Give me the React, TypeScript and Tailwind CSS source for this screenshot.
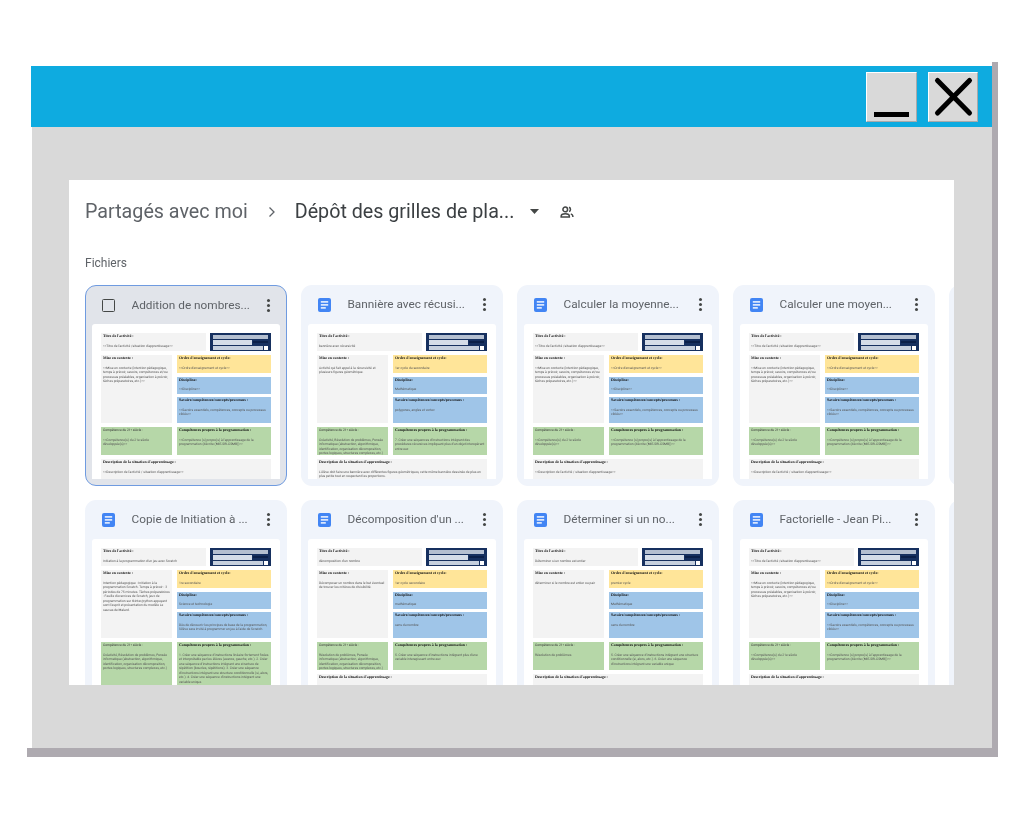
const bodyFont = { fontFamily: '"Roboto", "Liberation Sans", sans-serif' };

interface DocData {
  name: string;
  title: string;
  context: string;
  order: string;
  discipline: string;
  knowledge: string;
  skills21: string;
  prog: string;
  desc: string;
  selected?: boolean;
  tallGreen?: boolean;
}

const T = "<<Titre de l'activité /situation d'apprentissage>>";
const C =
  "<<Mise en contexte (intention pédagogique, temps à prévoir, savoirs, compétences et/ou processus préalables, organisation à prévoir, tâches préparatoires, etc.)>>";
const O = "<<Ordre d'enseignement et cycle>>";
const D = "<<Discipline>>";
const K = "<<Savoirs essentiels, compétences, concepts ou processus ciblés>>";
const S = "<<Compétence(s) du 21e siècle développée(s)>>";
const P =
  "<<Compétence (s) propre(s) à l'apprentissage de la programmation (décrite (MIE-SRI-CSMB))>>";
const E = "<<Description de l'activité / situation d'apprentissage>>";
const CR =
  "Créativité, Résolution de problèmes, Pensée informatique (abstraction, algorithmique, identification, organisation décomposition, portes logiques, structures complexes, etc.)";

const docs: DocData[] = [
  { name: "Addition de nombres...", title: T, context: C, order: O, discipline: D, knowledge: K, skills21: S, prog: P, desc: E, selected: true },
  {
    name: "Bannière avec récusi...",
    title: "bannière avec récursivité",
    context: "Activité qui fait appel à la récursivité et plusieurs figures géométrique.",
    order: "1er cycle du secondaire",
    discipline: "Mathématique",
    knowledge: "polygones, angles et vertex",
    skills21: CR,
    prog: "7. Créer une séquences d'instructions intégrant des procédures récursives impliquant plus d'un objet interopérant entre eux",
    desc: "L'élève doit faire une bannière avec différentes figures géométriques, cette même bannière dessinée de plus en plus petite tout en respectant les proportions.",
  },
  { name: "Calculer la moyenne...", title: T, context: C, order: O, discipline: D, knowledge: K, skills21: S, prog: P, desc: E },
  { name: "Calculer une moyen...", title: T, context: C, order: O, discipline: D, knowledge: K, skills21: S, prog: P, desc: E },
  {
    name: "Copie de Initiation à ...",
    title: "Initiation à la programmation d'un jeu avec Scratch",
    context:
      "Intention pédagogique : Initiation à la programmation Scratch. Temps à prévoir : 3 périodes de 75 minutes. Tâches préparatoires : Feuille d'exercices de Scratch, jeux de programmation sur tkinter/python appuyant sont l'esprit et présentation du modèle Le sauvas de Malard.",
    order: "1re secondaire",
    discipline: "Science et technologie",
    knowledge: "Dès de découvrir les principes de base de la programmation, l'élève sera invité à programmer un jeu à l'aide de Scratch.",
    skills21: CR,
    prog: "1. Créer une séquence d'instructions linéaire fortement fixées et interprétable par les élèves (avance, gauche, etc.). 2. Créer une séquence d'instructions intégrant une structure de répétition (boucles, répétitions). 3. Créer une séquence d'instructions intégrant une structure conditionnelle (si, alors, etc.). 4. Créer une séquence d'instructions intégrant une variable unique.",
    desc: "",
    tallGreen: true,
  },
  {
    name: "Décomposition d'un ...",
    title: "décomposition d'un nombre",
    context: "Décomposer un nombre dans le but éventuel de trouver les critères de divisibilité.",
    order: "1er cycle secondaire",
    discipline: "mathématique",
    knowledge: "sens du nombre",
    skills21: "Résolution de problèmes, Pensée informatique (abstraction, algorithmique, identification, organisation décomposition, portes logiques, structures complexes, etc.)",
    prog: "5. Créer une séquence d'instructions intégrant plus d'une variable interagissant entre eux",
    desc: "",
  },
  {
    name: "Déterminer si un no...",
    title: "Déterminer si un nombre est entier",
    context: "déterminer si le nombre est entier ou pair",
    order: "premier cycle",
    discipline: "Mathématique",
    knowledge: "sens du nombre",
    skills21: "Résolution de problèmes",
    prog: "5. Créer une séquence d'instructions intégrant une structure conditionnelle (si, alors, etc.). 6. Créer une séquence d'instructions intégrant une variable unique",
    desc: "",
  },
  { name: "Factorielle - Jean Pi...", title: T, context: C, order: O, discipline: D, knowledge: K, skills21: S, prog: P, desc: "" },
];

function Cell({
  label,
  body,
  bg,
  className = "",
  plain = false,
}: {
  label: string;
  body: string;
  bg: string;
  className?: string;
  plain?: boolean;
}) {
  return (
    <div className={`${bg} ${className} overflow-hidden px-[2px] pt-[1px] text-[3.3px] leading-[4.5px] text-[#555] [text-rendering:geometricPrecision]`}>
      <p
        className={plain ? "mb-[5px] text-[#333]" : "mb-[5px] font-bold text-[#111]"}
        style={plain ? undefined : { fontFamily: '"Liberation Serif", serif', fontSize: "3.9px" }}
      >
        {label}
      </p>
      <p>{body}</p>
    </div>
  );
}

// the little screenshot pasted in the corner of every planning grid
function LogoStrip() {
  return (
    <div className="flex h-[18px] flex-col justify-center gap-[1px] bg-[#16305f] px-[3px]">
      <div className="h-[4px] w-full bg-[#b4bfd0]" />
      <div className="flex h-[5px] gap-[1px]">
        <div className="w-[39px] bg-[#d5dde8]" />
        <div className="flex flex-1 items-center">
          <div className="h-[2px] w-full bg-[#0b2049]" />
        </div>
      </div>
      <div className="flex h-[4px] gap-[1px]">
        <div className="flex-1 bg-[#c6d0de]" />
        <div className="w-[4px] bg-white" />
      </div>
    </div>
  );
}

function DocPreview({ doc }: { doc: DocData }) {
  return (
    <div
      className={
        doc.selected
          ? "mx-[6px] h-[155px] overflow-hidden rounded-t-[3px] bg-white px-[9px] pt-[9px] blur-[0.3px]"
          : "mx-[7px] h-[155px] overflow-hidden rounded-t-[3px] bg-white px-[9px] pt-[9px] blur-[0.3px]"
      }
      style={bodyFont}
    >
      <div className="grid grid-cols-[105px_61px] gap-x-[4px]">
        <Cell label="Titre de l'activité :" body={doc.title} bg="bg-[#f3f3f3]" className="h-[18px]" />
        <LogoStrip />
      </div>
      <div className="mt-[4px] grid grid-cols-[71px_94px] gap-x-[5px]">
        <Cell label="Mise en contexte :" body={doc.context} bg="bg-[#f3f3f3]" className="h-[68px]" />
        <div className="flex h-[68px] flex-col gap-[3.5px]">
          <Cell label="Ordre d'enseignement et cycle:" body={doc.order} bg="bg-[#ffe599]" className="h-[18px]" />
          <Cell label="Discipline:" body={doc.discipline} bg="bg-[#9fc5e8]" className="h-[17px]" />
          <Cell label="Savoirs/compétences/concepts/processus :" body={doc.knowledge} bg="bg-[#9fc5e8]" className="h-[26px]" />
        </div>
      </div>
      <div className="mt-[4px] grid grid-cols-[71px_94px] gap-x-[5px]">
        <Cell label="Compétence du 21ᵉ siècle :" body={doc.skills21} bg="bg-[#b6d7a8]" className={doc.tallGreen ? "h-[60px]" : "h-[28px]"} plain />
        <Cell label="Compétences propres à la programmation :" body={doc.prog} bg="bg-[#b6d7a8]" className={doc.tallGreen ? "h-[60px]" : "h-[28px]"} />
      </div>
      {!doc.tallGreen && (
        <Cell label="Description de la situation d'apprentissage :" body={doc.desc} bg="bg-[#f3f3f3]" className="mt-[4px] h-[24px]" />
      )}
    </div>
  );
}

function DocsIcon() {
  return (
    <svg width="13" height="14" viewBox="0 0 13 14" className="shrink-0">
      <rect width="13" height="14" rx="2" fill="#4285f4" />
      <rect x="2.8" y="3.2" width="7.4" height="1.4" fill="#fff" />
      <rect x="2.8" y="6.2" width="7.4" height="1.4" fill="#fff" />
      <rect x="2.8" y="9.2" width="5" height="1.4" fill="#fff" />
    </svg>
  );
}

function MoreDots() {
  return (
    <div className="flex w-[3px] shrink-0 flex-col gap-[2px]">
      <span className="size-[3px] rounded-full bg-[#444746]" />
      <span className="size-[3px] rounded-full bg-[#444746]" />
      <span className="size-[3px] rounded-full bg-[#444746]" />
    </div>
  );
}

function FileCard({ doc }: { doc: DocData }) {
  return (
    <div
      className={
        doc.selected
          ? "h-[201px] w-[202px] shrink-0 overflow-hidden rounded-[11px] border border-[#6f9be0] bg-[#e1e4ea]"
          : "h-[201px] w-[202px] shrink-0 overflow-hidden rounded-[11px] bg-[#f0f4fb]"
      }
    >
      <div className={doc.selected ? "flex h-[38px] items-center pl-[16px] pr-[16px]" : "flex h-[39px] items-center pl-[17px] pr-[17px]"}>
        {doc.selected ? (
          <span className="size-[13px] shrink-0 rounded-[1.5px] border-[1.6px] border-[#444746]" />
        ) : (
          <DocsIcon />
        )}
        <span className="ml-[16.5px] flex-1 truncate pt-[1px] text-[11.8px] text-[#5f6368]" style={bodyFont}>
          {doc.name}
        </span>
        <MoreDots />
      </div>
      <DocPreview doc={doc} />
    </div>
  );
}

function PeopleIcon() {
  return (
    <svg width="14" height="12" viewBox="0 0 24 20" fill="none" stroke="#444746" strokeWidth="2.6">
      <circle cx="9" cy="5.5" r="4" />
      <path d="M2 18.5v-1.5c0-2.6 3.5-4 7-4s7 1.4 7 4v1.5z" />
      <path d="M15.5 1.8a4 4 0 0 1 0 7.4M18.5 13.2c2 .7 3.5 1.9 3.5 3.8v1.5" />
    </svg>
  );
}

export default function App() {
  return (
    <div className="h-[819px] w-[1024px] overflow-hidden bg-white pl-[27px] pt-[62px]">
      <div className="relative h-[695px] w-[971px] pl-[5px] pt-[4px]">
        {/* window drop shadow: right and bottom bars only */}
        <div className="absolute bottom-0 right-0 top-0 w-[6px] bg-[#aeaab0]" />
        <div className="absolute bottom-0 left-0 right-0 h-[9px] bg-[#aeaab0]" />
        <div className="flex h-[682px] w-[960px] flex-col bg-[#d9d9d9]">
          <header className="-ml-[1px] flex h-[61px] shrink-0 justify-end gap-[11px] bg-[#0eabe0] pr-[14px] pt-[6px]">
            <button className="flex h-[50px] w-[51px] items-end justify-center border border-b-[#a9a9a9] border-l-white border-r-[#a9a9a9] border-t-white bg-[#d9d9d9] pb-[4px]">
              <span className="h-[5px] w-[35px] bg-black" />
            </button>
            <button className="flex h-[50px] w-[50px] items-center justify-center border border-b-[#a9a9a9] border-l-white border-r-[#a9a9a9] border-t-white bg-[#d9d9d9]">
              <svg width="42" height="42" viewBox="0 0 42 42">
                <path d="M5.5 4.5 L37.5 37 M37.5 4.5 L5.5 37" stroke="#000" strokeWidth="5" strokeLinecap="round" />
              </svg>
            </button>
          </header>
          <div className="ml-[37px] mt-[53px] h-[505px] w-[885px] overflow-hidden bg-white pl-[16px] blur-[0.4px]" style={bodyFont}>
            <div className="flex h-[62px] items-center pt-[1px] text-[19.7px]">
              <span className="text-[#5f6368]">Partagés avec moi</span>
              <svg width="10" height="12" viewBox="0 0 10 12" className="ml-[19px] mr-[18px]" fill="none" stroke="#5f6368" strokeWidth="1.3">
                <path d="M2.5 1.5 L7 6 L2.5 10.5" />
              </svg>
              <span className="text-[#3c4043]">Dépôt des grilles de pla...</span>
              <svg width="9" height="5" viewBox="0 0 9 5" className="ml-[16px] mr-[21px]">
                <path d="M0 0 H9 L4.5 5 Z" fill="#444746" />
              </svg>
              <PeopleIcon />
            </div>
            <p className="mt-[13px] text-[12px] leading-[16px] text-[#5f6368]">Fichiers</p>
            <div className="mt-[14px] flex flex-col gap-[14px]">
              <div className="flex gap-[14px]">
                {docs.slice(0, 4).map((doc) => (
                  <FileCard key={doc.name} doc={doc} />
                ))}
                <div className="h-[201px] w-[20px] shrink-0 rounded-l-[11px] bg-[#f0f4fb]" />
              </div>
              <div className="flex gap-[14px]">
                {docs.slice(4).map((doc) => (
                  <FileCard key={doc.name} doc={doc} />
                ))}
                <div className="h-[201px] w-[20px] shrink-0 rounded-l-[11px] bg-[#f0f4fb]" />
              </div>
            </div>
          </div>
        </div>
      </div>
    </div>
  );
}
